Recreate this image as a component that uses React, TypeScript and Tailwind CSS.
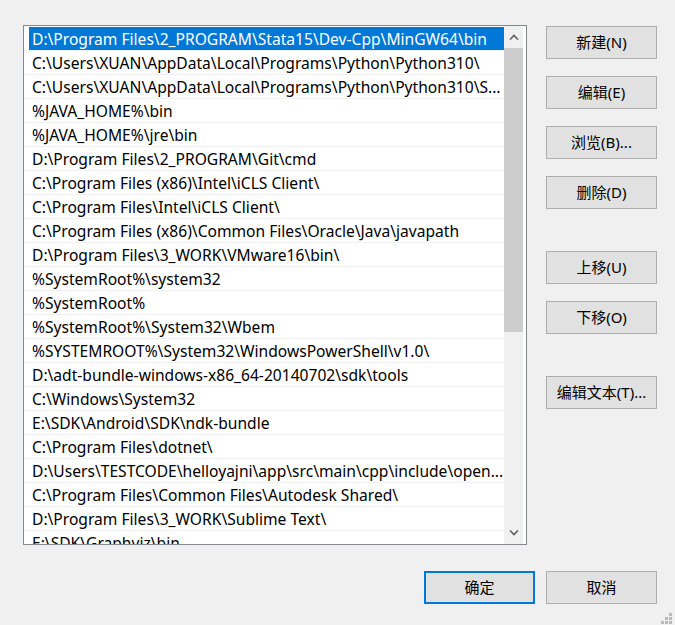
import React from 'react';

const paths: string[] = [
  'D:\\Program Files\\2_PROGRAM\\Stata15\\Dev-Cpp\\MinGW64\\bin',
  'C:\\Users\\XUAN\\AppData\\Local\\Programs\\Python\\Python310\\',
  'C:\\Users\\XUAN\\AppData\\Local\\Programs\\Python\\Python310\\S...',
  '%JAVA_HOME%\\bin',
  '%JAVA_HOME%\\jre\\bin',
  'D:\\Program Files\\2_PROGRAM\\Git\\cmd',
  'C:\\Program Files (x86)\\Intel\\iCLS Client\\',
  'C:\\Program Files\\Intel\\iCLS Client\\',
  'C:\\Program Files (x86)\\Common Files\\Oracle\\Java\\javapath',
  'D:\\Program Files\\3_WORK\\VMware16\\bin\\',
  '%SystemRoot%\\system32',
  '%SystemRoot%',
  '%SystemRoot%\\System32\\Wbem',
  '%SYSTEMROOT%\\System32\\WindowsPowerShell\\v1.0\\',
  'D:\\adt-bundle-windows-x86_64-20140702\\sdk\\tools',
  'C:\\Windows\\System32',
  'E:\\SDK\\Android\\SDK\\ndk-bundle',
  'C:\\Program Files\\dotnet\\',
  'D:\\Users\\TESTCODE\\helloyajni\\app\\src\\main\\cpp\\include\\open...',
  'C:\\Program Files\\Common Files\\Autodesk Shared\\',
  'D:\\Program Files\\3_WORK\\Sublime Text\\',
  'E:\\SDK\\Graphviz\\bin',
];

const font = { fontFamily: '"Noto Sans", "Noto Sans CJK SC", sans-serif' };

const WinButton: React.FC<{ label: string; primary?: boolean; className?: string }> = ({ label, primary, className }) => (
  <button
    type="button"
    className={
      'w-[111px] h-[33px] bg-[#e1e1e1] text-[15px] text-black flex items-center justify-center ' +
      (primary ? 'border-2 border-[#0078d7] ' : 'border border-[#adadad] ') +
      (className ?? '')
    }
  >
    {label}
  </button>
);

const App: React.FC = () => {
  return (
    <div className="w-[675px] h-[625px] bg-[#f0f0f0] relative overflow-hidden" style={font}>
      <div className="flex pt-[25px] pl-[23px]">
        {/* List box */}
        <div className="w-[504px] h-[520px] border border-[#828790] bg-white flex overflow-hidden">
          <div className="w-[480px] pt-[1px] overflow-hidden">
            {paths.map((p, i) => (
              <div key={i} className="h-[24px] border-b border-[#f0f0f0] flex">
                <div
                  className={
                    'ml-[5px] flex-1 h-[23px] pl-[3px] pt-[2px] flex items-center whitespace-nowrap overflow-hidden text-[15.6px] leading-none ' +
                    (i === 0 ? 'bg-[#0078d7] text-white' : 'text-black')
                  }
                >
                  {p}
                </div>
              </div>
            ))}
          </div>
          {/* Scrollbar */}
          <div className="w-[19px] h-full bg-[#f0f0f0] flex flex-col">
            <div className="h-[22px] flex items-center justify-center">
              <svg width="10" height="6" viewBox="0 0 10 6">
                <path d="M1 5.5 L5 1.5 L9 5.5" fill="none" stroke="#606060" strokeWidth="1.6" />
              </svg>
            </div>
            <div className="h-[284px] bg-[#cdcdcd]" />
            <div className="flex-1" />
            <div className="h-[22px] flex items-center justify-center">
              <svg width="10" height="6" viewBox="0 0 10 6">
                <path d="M1 0.5 L5 4.5 L9 0.5" fill="none" stroke="#606060" strokeWidth="1.6" />
              </svg>
            </div>
          </div>
          <div className="w-[2px] bg-white" />
        </div>

        {/* Right-side buttons */}
        <div className="ml-[19px] pt-[1px] flex flex-col">
          <WinButton label="新建(N)" />
          <WinButton label="编辑(E)" className="mt-[17px]" />
          <WinButton label="浏览(B)..." className="mt-[17px]" />
          <WinButton label="删除(D)" className="mt-[17px]" />
          <WinButton label="上移(U)" className="mt-[42px]" />
          <WinButton label="下移(O)" className="mt-[17px]" />
          <WinButton label="编辑文本(T)..." className="mt-[42px]" />
        </div>
      </div>

      {/* Bottom buttons */}
      <div className="flex justify-end gap-[11px] pr-[18px] mt-[26px]">
        <WinButton label="确定" primary />
        <WinButton label="取消" />
      </div>

      {/* Size grip */}
      <div className="absolute right-[3px] bottom-[1px] grid grid-cols-3 gap-[1px]">
        <div className="w-[3px] h-[3px]" />
        <div className="w-[3px] h-[3px]" />
        <div className="w-[3px] h-[3px] bg-[#b9b9b9]" />
        <div className="w-[3px] h-[3px]" />
        <div className="w-[3px] h-[3px] bg-[#b9b9b9]" />
        <div className="w-[3px] h-[3px] bg-[#b9b9b9]" />
        <div className="w-[3px] h-[3px] bg-[#b9b9b9]" />
        <div className="w-[3px] h-[3px] bg-[#b9b9b9]" />
        <div className="w-[3px] h-[3px] bg-[#b9b9b9]" />
      </div>
    </div>
  );
};

export default App;
